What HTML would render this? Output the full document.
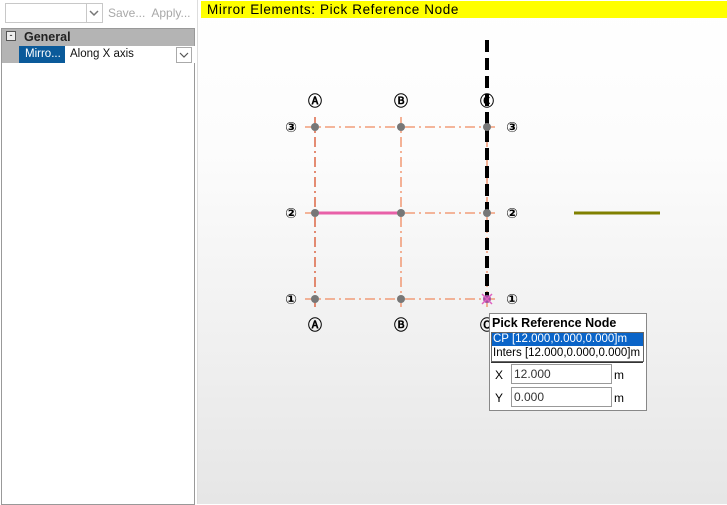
<!DOCTYPE html><html><head><style>
body{margin:0;width:727px;height:504px;overflow:hidden;font-family:"Liberation Sans",sans-serif;font-size:12px;position:relative;background:#fff}
.a{position:absolute}
</style></head><body>
<div class="a" style="left:0;top:0;width:197px;height:504px;background:#fff"></div>
<div class="a" style="left:5px;top:3px;width:96px;height:18px;border:1px solid #c8c8c8;background:#fff"></div>
<div class="a" style="left:86px;top:4px;width:15px;height:18px;border-left:1px solid #c8c8c8"></div>
<svg class="a" style="left:89px;top:9px" width="10" height="8"><path d="M1 2l4 4 4-4" stroke="#777" stroke-width="1.5" fill="none"/></svg>
<div class="a" style="left:108px;top:6px;color:#a8a8a8">Save...&nbsp; Apply...</div>
<div class="a" style="left:1px;top:28px;width:192px;height:475px;border:1px solid #999;background:#fff"></div>
<div class="a" style="left:2px;top:29px;width:192px;height:34px;background:#b4b4b4"></div>
<div class="a" style="left:6px;top:31px;width:8px;height:8px;border:1px solid #555;background:#eee;font-size:9px;line-height:7px;text-align:center">-</div>
<div class="a" style="left:24px;top:30px;font-weight:bold;color:#222;font-size:12.5px">General</div>
<div class="a" style="left:19px;top:46px;width:46px;height:17px;background:#0a5a9a;color:#fff;line-height:17px;padding-left:6px;font-size:11.5px">Mirro...</div>
<div class="a" style="left:65px;top:46px;width:128px;height:17px;background:#fff;line-height:17px;padding-left:5px;font-size:11.5px;color:#111">Along X axis</div>
<div class="a" style="left:176px;top:47px;width:14px;height:14px;border:1px solid #aaa"></div>
<svg class="a" style="left:179px;top:51px" width="10" height="8"><path d="M1 2l4 4 4-4" stroke="#555" stroke-width="1.2" fill="none"/></svg>
<div class="a" style="left:197px;top:0;width:530px;height:504px;background:linear-gradient(#fff 0%,#fcfcfc 30%,#e6e6e6 100%);border-left:1px solid #ddd"></div>
<div class="a" style="left:201px;top:1px;width:526px;height:17px;background:#ffff00;font-size:13.5px;line-height:17px;padding-left:6px;letter-spacing:0.6px;color:#000">Mirror Elements: Pick Reference Node</div>
<svg class="a" style="left:0;top:0" width="727" height="504">
<g stroke="#f08a60" stroke-width="1.3" stroke-dasharray="10,4,2,4" fill="none">
<line x1="305" y1="127" x2="498" y2="127"/><line x1="305" y1="213" x2="498" y2="213"/><line x1="305" y1="299" x2="498" y2="299"/>
<line x1="315" y1="117" x2="315" y2="309" stroke="#d8502a"/><line x1="401" y1="117" x2="401" y2="309"/><line x1="487" y1="117" x2="487" y2="309"/>
</g>
<line x1="315" y1="213" x2="401" y2="213" stroke="#e860a8" stroke-width="3"/>
<line x1="487" y1="40" x2="487" y2="299" stroke="#000" stroke-width="4" stroke-dasharray="12,6"/>
<line x1="574" y1="213" x2="660" y2="213" stroke="#808000" stroke-width="3"/>
<g fill="#777"><circle cx="315" cy="127" r="4"/><circle cx="401" cy="127" r="4"/><circle cx="487" cy="127" r="4"/><circle cx="315" cy="213" r="4"/><circle cx="401" cy="213" r="4"/><circle cx="487" cy="213" r="4"/><circle cx="315" cy="299" r="4"/><circle cx="401" cy="299" r="4"/><circle cx="487" cy="299" r="4" fill="#a050a0"/></g>
<path d="M482 294l10 10M492 294l-10 10" stroke="#e060c0" stroke-width="1.5"/>
<g font-family="DejaVu Sans" font-size="14" font-weight="bold" text-anchor="middle" fill="#000">
<text x="315" y="106">Ⓐ</text><text x="401" y="106">Ⓑ</text><text x="487" y="106">Ⓒ</text>
<text x="315" y="330">Ⓐ</text><text x="401" y="330">Ⓑ</text><text x="487" y="330">Ⓒ</text>
<text x="291" y="132">③</text><text x="291" y="218">②</text><text x="291" y="304">①</text>
<text x="512" y="132">③</text><text x="512" y="218">②</text><text x="512" y="304">①</text>
</g>
</svg>
<div class="a" style="left:489px;top:313px;width:156px;height:96px;background:#fff;border:1px solid #888"></div>
<div class="a" style="left:492px;top:316px;font-weight:bold;font-size:12.5px">Pick Reference Node</div>
<div class="a" style="left:491px;top:332px;width:151px;height:28px;border:1px solid #666"></div>
<div class="a" style="left:492px;top:333px;width:150px;height:13px;background:#0a64c8;color:#fff;line-height:13px;font-size:11.5px;padding-left:1px">CP [12.000,0.000,0.000]m</div>
<div class="a" style="left:493px;top:347px;line-height:13px;font-size:11.5px">Inters [12.000,0.000,0.000]m</div>
<div class="a" style="left:491px;top:362px;width:152px;height:1px;background:#333"></div>
<div class="a" style="left:495px;top:368px">X</div>
<div class="a" style="left:511px;top:364px;width:97px;height:18px;border:1px solid #999;line-height:18px;padding-left:2px;color:#333">12.000</div>
<div class="a" style="left:614px;top:368px">m</div>
<div class="a" style="left:495px;top:391px">Y</div>
<div class="a" style="left:511px;top:387px;width:97px;height:18px;border:1px solid #999;line-height:18px;padding-left:2px;color:#333">0.000</div>
<div class="a" style="left:614px;top:391px">m</div>
</body></html>
